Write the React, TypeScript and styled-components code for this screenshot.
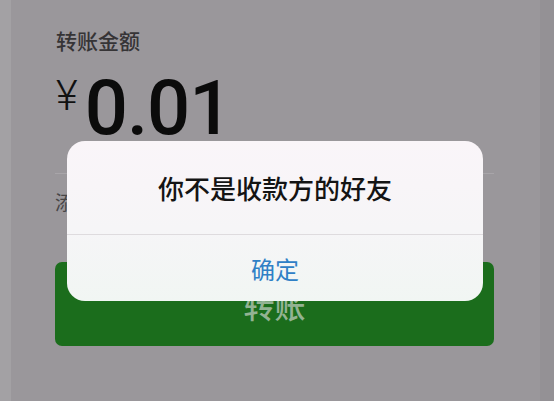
import styled, { createGlobalStyle } from "styled-components";

const GlobalStyle = createGlobalStyle`
  html, body {
    margin: 0;
    padding: 0;
    background: #9a979b;
  }
  * {
    box-sizing: border-box;
  }
`;

const Page = styled.div`
  position: relative;
  width: 554px;
  height: 401px;
  overflow: hidden;
  padding: 30px 60px 0 55px;
  background: linear-gradient(
    90deg,
    #a3a1a4 0,
    #a3a1a4 11px,
    #9a979b 11px,
    #9a979b 540px,
    #949195 540px
  );
  font-family: "Noto Sans CJK SC", "Noto Sans", sans-serif;
`;

const Label = styled.div`
  padding-left: 1px;
  font-size: 21px;
  font-weight: 500;
  line-height: 1;
  color: #363436;
`;

const AmountRow = styled.div`
  display: flex;
  align-items: flex-start;
  gap: 7px;
  margin-top: 19px;
  padding-left: 1px;
`;

const Yen = styled.span`
  margin-top: 5px;
  font-family: Roboto, "Liberation Sans", sans-serif;
  font-size: 42px;
  font-weight: 300;
  line-height: 1;
  color: #111;
`;

const Digits = styled.span`
  font-family: Roboto, "Liberation Sans", sans-serif;
  font-size: 76px;
  font-weight: 500;
  line-height: 1;
  letter-spacing: -1px;
  color: #0b0b0b;
`;

const Divider = styled.div`
  height: 1px;
  margin-top: 27px;
  background: rgba(255, 255, 255, 0.14);
`;

const Note = styled.div`
  margin-top: 18px;
  font-size: 19px;
  line-height: 1;
  color: #474547;
`;

const TransferButton = styled.div`
  display: flex;
  align-items: center;
  justify-content: center;
  height: 84px;
  margin-top: 51px;
  border-radius: 7px;
  background: #1b6d1c;
  font-size: 31px;
  font-weight: 500;
  color: #93b393;
`;

const Dialog = styled.div`
  position: absolute;
  left: 67px;
  top: 141px;
  width: 416px;
  height: 160px;
  display: flex;
  flex-direction: column;
  border-radius: 18px;
  overflow: hidden;
  background: linear-gradient(180deg, #faf5f9 0%, #f6f5f7 55%, #f1f6f3 100%);
`;

const DialogTitle = styled.div`
  display: flex;
  align-items: center;
  justify-content: center;
  height: 93px;
  font-size: 26px;
  font-weight: 500;
  color: #141414;
`;

const DialogDivider = styled.div`
  height: 1px;
  background: #dedbde;
`;

const DialogAction = styled.div`
  flex: 1;
  display: flex;
  align-items: center;
  justify-content: center;
  font-size: 24px;
  color: #2f80c6;
`;

export default function App() {
  return (
    <>
      <GlobalStyle />
      <Page>
        <Label>转账金额</Label>
        <AmountRow>
          <Yen>¥</Yen>
          <Digits>0.01</Digits>
        </AmountRow>
        <Divider />
        <Note>添加转账说明</Note>
        <TransferButton>转账</TransferButton>
        <Dialog>
          <DialogTitle>你不是收款方的好友</DialogTitle>
          <DialogDivider />
          <DialogAction>确定</DialogAction>
        </Dialog>
      </Page>
    </>
  );
}
